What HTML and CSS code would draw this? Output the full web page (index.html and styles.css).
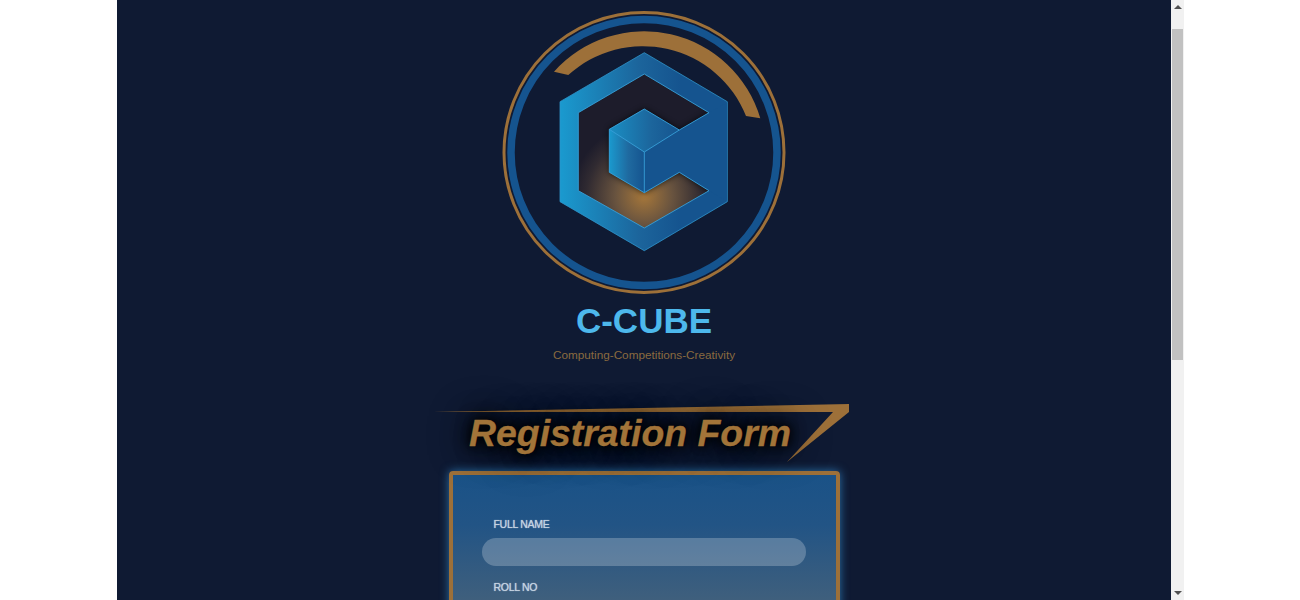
FILE: index.html
```html
<!DOCTYPE html>
<html lang="en">
<head>
<meta charset="utf-8">
<title>C-CUBE Registration</title>
<link rel="stylesheet" href="styles.css">
</head>
<body>
<div class="frame">
  <main class="page">
    <svg class="logo" viewBox="494 0 300 300" width="300" height="300" role="img" aria-label="C-Cube logo">
      <defs>
        <linearGradient id="hexFill" gradientUnits="userSpaceOnUse" x1="560" y1="0" x2="680" y2="0">
          <stop offset="0" stop-color="#1a9acf"/>
          <stop offset="0.65" stop-color="#1c659c"/>
          <stop offset="1" stop-color="#15548f"/>
        </linearGradient>
        <linearGradient id="leftFace" gradientUnits="userSpaceOnUse" x1="609" y1="0" x2="644" y2="0">
          <stop offset="0" stop-color="#1a9acf"/>
          <stop offset="0.55" stop-color="#1f6aa0"/>
          <stop offset="1" stop-color="#15548f"/>
        </linearGradient>
        <linearGradient id="topFace" gradientUnits="userSpaceOnUse" x1="609" y1="0" x2="680" y2="0">
          <stop offset="0" stop-color="#1a8fc4"/>
          <stop offset="0.6" stop-color="#1c659c"/>
          <stop offset="1" stop-color="#15548f"/>
        </linearGradient>
        <radialGradient id="glow" gradientUnits="userSpaceOnUse" cx="644" cy="196" r="72">
          <stop offset="0" stop-color="#a6773a"/>
          <stop offset="0.4" stop-color="#68533f"/>
          <stop offset="0.8" stop-color="#302a31"/>
          <stop offset="1" stop-color="#1d1c2b"/>
        </radialGradient>
        <clipPath id="hollowClip">
          <polygon points="644.3,74 709,112.7 679.3,130 644.3,109 609.3,129.3 609.3,172.3 644.3,192.7 679.3,172.3 709,190.7 644.3,228 578.3,190.7 578.3,112.7"/>
        </clipPath>
        <filter id="cubeShadow" x="-30%" y="-30%" width="160%" height="160%">
          <feGaussianBlur stdDeviation="3"/>
        </filter>
      </defs>
      <circle class="ring-gold" cx="644" cy="152.5" r="140"/>
      <circle class="ring-blue" cx="644" cy="152.5" r="133"/>
      <path class="arc" d="M554 71.7A121 121 0 0 1 760.3 118.3L746 116A111 111 0 0 0 568.3 75Z"/>
      <polygon class="hex" points="644.3,52.7 727.3,101.7 727.3,201.7 644.3,250.7 560,201.7 560,101.7"/>
      <polygon class="hollow" points="644.3,74 709,112.7 679.3,130 644.3,109 609.3,129.3 609.3,172.3 644.3,192.7 679.3,172.3 709,190.7 644.3,228 578.3,190.7 578.3,112.7"/>
      <g clip-path="url(#hollowClip)">
        <polygon class="cast" points="644.3,109 679.3,130 709,112.7 740,112.7 740,190.7 709,190.7 679.3,172.3 644.3,192.7 609.3,172.3 609.3,129.3"/>
      </g>
      <polygon class="right-face" points="644.3,152 679.3,130 709,112.7 726.8,102.5 726.8,201 709,190.7 679.3,172.3 644.3,192.7"/>
      <polygon class="top-face" points="644.3,109 679.3,130 644.3,152 609.3,129.3"/>
      <polygon class="left-face" points="609.3,129.3 644.3,152 644.3,192.7 609.3,172.3"/>
      <polyline class="edge" points="709,112.7 644.3,74 578.3,112.7 578.3,190.7 644.3,228 709,190.7 679.3,172.3 644.3,192.7"/>
      <polyline class="edge" points="709,112.7 679.3,130 644.3,152 644.3,192.7 609.3,172.3 609.3,129.3 644.3,152"/>
      <polyline class="edge" points="609.3,129.3 644.3,109 679.3,130"/>
    </svg>
    <h1 class="brand">C-CUBE</h1>
    <p class="tagline">Computing-Competitions-Creativity</p>
    <div class="banner">
      <svg class="swoosh" viewBox="0 0 416 58" width="416" height="58" aria-hidden="true">
        <polygon points="0,8 416,0 416,8 354,58 400,8"/>
      </svg>
      <h2 class="banner-title">Registration Form</h2>
    </div>
    <form class="card">
      <div class="field">
        <label class="field-label" for="full-name">FULL NAME</label>
        <input class="field-input" id="full-name" type="text">
      </div>
      <div class="field">
        <label class="field-label" for="roll-no">ROLL NO</label>
        <input class="field-input" id="roll-no" type="text">
      </div>
    </form>
  </main>
  <div class="scrollbar" aria-hidden="true">
    <span class="arrow arrow-up"></span>
    <span class="thumb"></span>
    <span class="arrow arrow-down"></span>
  </div>
</div>
</body>
</html>
```

FILE: styles.css
```css
html, body {
  margin: 0;
  height: 100%;
  background: #fff;
  overflow: hidden;
}

.frame {
  display: flex;
  width: 1067px;
  height: 600px;
  margin-left: 117px;
}

.page {
  flex: 1;
  min-width: 0;
  height: 600px;
  overflow: hidden;
  background: #0f1a33;
  display: flex;
  flex-direction: column;
  align-items: center;
  font-family: "Liberation Sans", Arial, sans-serif;
}

.logo {
  display: block;
  flex: none;
}

.ring-gold { fill: none; stroke: #9d7039; stroke-width: 3; }
.ring-blue { fill: none; stroke: #15548f; stroke-width: 7.5; }
.arc { fill: #9d7039; }
.hex { fill: url(#hexFill); stroke: #2f94cc; stroke-width: 0.8; }
.hollow { fill: url(#glow); }
.cast { fill: #000; opacity: 0.75; filter: url(#cubeShadow); }
.right-face { fill: #15548f; }
.top-face { fill: url(#topFace); }
.left-face { fill: url(#leftFace); }
.edge { fill: none; stroke: #379fd8; stroke-width: 0.9; }

.brand {
  margin: 0;
  height: 42px;
  line-height: 42px;
  font-size: 35px;
  font-weight: 700;
  color: #4db8ec;
}

.tagline {
  margin: 5px 0 0;
  height: 15px;
  line-height: 15px;
  font-size: 11.75px;
  color: #8a6a3f;
}

.banner {
  position: relative;
  flex: none;
  width: 416px;
  height: 58px;
  margin: 42px 6px 0 0;
}

.swoosh {
  position: absolute;
  left: 0;
  top: 0;
  fill: #9d7039;
}

.banner-title {
  margin: 0;
  padding: 7px 0 0 36px;
  font-size: 37.4px;
  line-height: 44px;
  font-style: italic;
  font-weight: 700;
  white-space: nowrap;
  color: #a27439;
  position: relative;
  -webkit-text-stroke: 0.3px #a27439;
  text-shadow: 0 0 8px #000, 0 0 16px #000, 0 0 28px #000, 0 0 40px #000;
}

.card {
  flex: none;
  box-sizing: border-box;
  width: 391px;
  height: 400px;
  margin-top: 9px;
  padding: 43px 29px 0;
  border: 4px solid #9d7039;
  border-radius: 4px;
  background: linear-gradient(180deg, #1a5287 0, #225485 50px, #41607c 130px, #4c6a84 400px);
  box-shadow: 0 0 10px #2a6fa8;
  display: flex;
  flex-direction: column;
  gap: 15px;
}

.field {
  width: 324px;
  display: flex;
  flex-direction: column;
  gap: 7px;
}

.field-label {
  padding-left: 12px;
  font-size: 10.5px;
  line-height: 13px;
  letter-spacing: -0.3px;
  color: #c5d3e2;
  text-shadow: 0 0 1px #c5d3e2;
}

.field-input {
  box-sizing: border-box;
  width: 100%;
  height: 28px;
  padding: 0 12px;
  border: 0;
  border-radius: 14px;
  background: rgba(255, 255, 255, 0.23);
}

.scrollbar {
  flex: none;
  width: 13px;
  height: 600px;
  box-sizing: border-box;
  background: #f1f1f1;
  display: flex;
  flex-direction: column;
  align-items: center;
  position: relative;
}

.arrow {
  position: absolute;
  width: 0;
  height: 0;
  border-left: 4px solid transparent;
  border-right: 4px solid transparent;
}

.arrow-up { top: 5px; border-bottom: 4px solid #505050; }
.arrow-down { bottom: 5px; border-top: 4px solid #505050; }

.thumb {
  width: 11px;
  height: 331px;
  margin-top: 29px;
  background: #c1c1c1;
}
```
